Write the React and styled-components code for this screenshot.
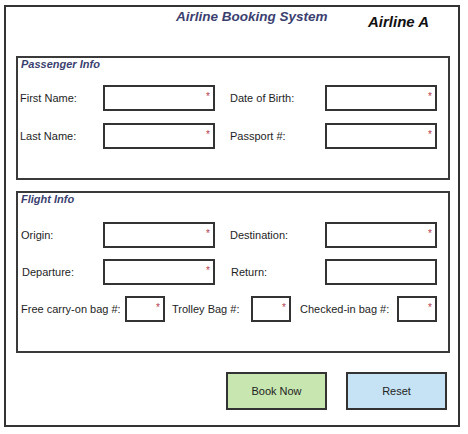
import React from "react";
import styled, { createGlobalStyle } from "styled-components";

const Global = createGlobalStyle`
  html, body { margin: 0; padding: 0; background: #ffffff; }
  body { font-family: "Liberation Sans", Arial, sans-serif; color: #222; }
`;

const Frame = styled.div`
  box-sizing: border-box;
  margin: 5px 0 0 4px;
  width: 456px;
  height: 422px;
  border: 2px solid #333;
  display: flex;
  flex-direction: column;
`;

const Header = styled.header`
  box-sizing: border-box;
  height: 49px;
  padding: 2px 0 0 170px;
  display: flex;
  align-items: flex-start;
`;

const Title = styled.h1`
  margin: 0;
  width: 192px;
  font-size: 13.5px;
  line-height: 16px;
  font-weight: bold;
  font-style: italic;
  color: #3b3f70;
  white-space: nowrap;
`;

const AirlineName = styled.div`
  margin-top: 4px;
  font-size: 15px;
  line-height: 17px;
  font-weight: bold;
  font-style: italic;
  color: #111;
  white-space: nowrap;
`;

const Section = styled.section`
  box-sizing: border-box;
  margin: ${(p) => p.$mt || 0}px 0 0 10px;
  width: 434px;
  height: ${(p) => p.$h}px;
  border: 2px solid #3a3a3a;
  display: flex;
  flex-direction: column;
`;

const Legend = styled.div`
  padding-left: 3px;
  font-size: 11px;
  line-height: 13px;
  font-weight: bold;
  font-style: italic;
  color: #3b3f70;
  margin-bottom: ${(p) => p.$gap}px;
`;

const Rows = styled.div`
  display: flex;
  flex-direction: column;
  gap: ${(p) => p.$gap}px;
`;

const Row = styled.div`
  display: flex;
  align-items: center;
  height: 26px;
`;

const Label = styled.span`
  box-sizing: border-box;
  width: ${(p) => p.$w}px;
  padding-left: ${(p) => p.$pl}px;
  font-size: 11px;
  line-height: 13px;
  color: #1e1e1e;
  white-space: nowrap;
`;

const InputBox = styled.div`
  box-sizing: border-box;
  position: relative;
  width: ${(p) => p.$w}px;
  height: 26px;
  border: 2px solid #333;
  background: #fff;
  &::after {
    content: ${(p) => (p.$required ? '"*"' : "none")};
    position: absolute;
    top: 5px;
    right: 3px;
    font-size: 10px;
    line-height: 10px;
    color: #b5404c;
  }
`;

const ButtonBar = styled.div`
  margin-top: 19px;
  padding-right: 11px;
  display: flex;
  justify-content: flex-end;
  gap: 19px;
`;

const Button = styled.button`
  box-sizing: border-box;
  width: 101px;
  height: 38px;
  border: 2px solid #333;
  border-radius: 0;
  background: ${(p) => p.$bg};
  font-family: "Liberation Sans", Arial, sans-serif;
  font-size: 11px;
  color: #222;
  padding: 0;
  cursor: pointer;
`;

function Field({ label, w, pl, inputW = 112, required = true }) {
  return (
    <>
      <Label $w={w} $pl={pl}>{label}</Label>
      <InputBox $w={inputW} $required={required} />
    </>
  );
}

export default function App() {
  return (
    <>
      <Global />
      <Frame>
        <Header>
          <Title>Airline Booking System</Title>
          <AirlineName>Airline A</AirlineName>
        </Header>

        <Section $h={124}>
          <Legend $gap={14}>Passenger Info</Legend>
          <Rows $gap={12}>
            <Row>
              <Field label="First Name:" w={85} pl={2} />
              <Field label="Date of Birth:" w={110} pl={15} />
            </Row>
            <Row>
              <Field label="Last Name:" w={85} pl={2} />
              <Field label="Passport #:" w={110} pl={15} />
            </Row>
          </Rows>
        </Section>

        <Section $h={162} $mt={11}>
          <Legend $gap={16}>Flight Info</Legend>
          <Rows $gap={11}>
            <Row>
              <Field label="Origin:" w={85} pl={3} />
              <Field label="Destination:" w={110} pl={15} />
            </Row>
            <Row>
              <Field label="Departure:" w={85} pl={4} />
              <Field label="Return:" w={110} pl={16} required={false} />
            </Row>
            <Row>
              <Field label="Free carry-on bag #:" w={107} pl={3} inputW={40} />
              <Field label="Trolley Bag #:" w={86} pl={7} inputW={40} />
              <Field label="Checked-in bag #:" w={106} pl={9} inputW={40} />
            </Row>
          </Rows>
        </Section>

        <ButtonBar>
          <Button $bg="#c8e6b0">Book Now</Button>
          <Button $bg="#c6e2f5">Reset</Button>
        </ButtonBar>
      </Frame>
    </>
  );
}
